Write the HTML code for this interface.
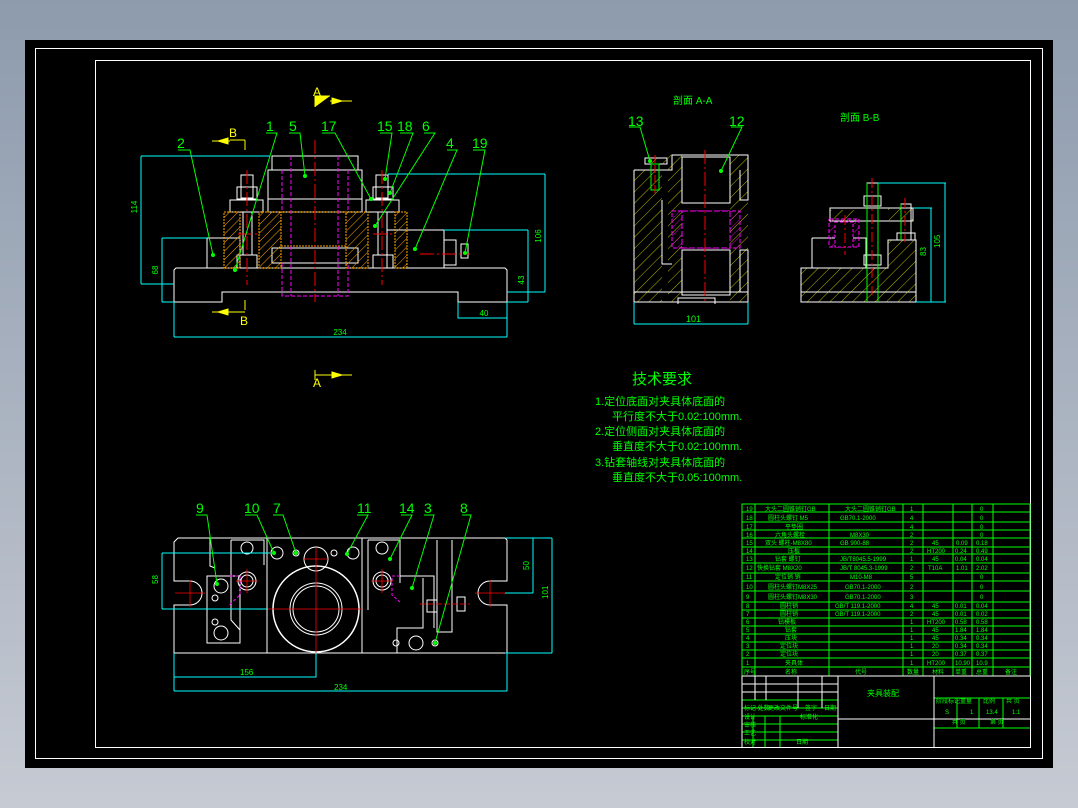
<!DOCTYPE html>
<html><head><meta charset="utf-8"><style>
html,body{margin:0;padding:0;width:1078px;height:808px;overflow:hidden;background:linear-gradient(#8d9bad,#c6cad3);}
svg{position:absolute;left:0;top:0}
text{font-family:"Liberation Sans","Noto Sans CJK SC",sans-serif;}
</style></head><body>
<svg width="1078" height="808" viewBox="0 0 1078 808" xmlns="http://www.w3.org/2000/svg">
<defs>
<pattern id="ho" width="6" height="6" patternUnits="userSpaceOnUse" patternTransform="rotate(45)"><line x1="0" y1="0" x2="0" y2="6" stroke="#ffa500" stroke-width="1"/></pattern>
<pattern id="hy" width="8" height="8" patternUnits="userSpaceOnUse" patternTransform="rotate(45)"><line x1="0" y1="0" x2="0" y2="8" stroke="#e6e600" stroke-width="0.8"/></pattern>
<pattern id="hm" width="6" height="6" patternUnits="userSpaceOnUse" patternTransform="rotate(45)"><line x1="0" y1="0" x2="0" y2="6" stroke="#ff00ff" stroke-width="0.8"/></pattern>
</defs>
<rect x="25" y="40" width="1028" height="728" fill="#000"/>
<rect x="35.5" y="48.5" width="1007" height="710" fill="none" stroke="#fff"/>
<rect x="95.5" y="60.5" width="935" height="687" fill="none" stroke="#fff"/>

<!-- FRONT VIEW -->
<g fill="none" stroke="#fff" stroke-width="1">
<path d="M176 268 H505 L507 270 V302 H458 V292 H222 V302 H174 V270 Z"/>
<rect x="272" y="156" width="86" height="14"/>
<rect x="268" y="170" width="94" height="42"/>
<line x1="268" y1="199" x2="362" y2="199"/>
<rect x="272" y="248" width="86" height="15"/>
<rect x="207" y="238" width="33" height="30"/>
<rect x="387" y="230" width="57" height="38"/>
<rect x="444" y="240" width="12" height="25"/>
<rect x="461" y="244" width="7" height="14"/>
<rect x="241" y="175" width="12" height="23"/><rect x="237" y="187" width="20" height="12"/><rect x="230" y="200" width="33" height="12"/>
<rect x="376" y="175" width="12" height="23"/><rect x="373" y="187" width="20" height="12"/><rect x="366" y="200" width="33" height="12"/>
<rect x="237" y="255" width="20" height="13"/><rect x="373" y="255" width="20" height="13"/>
<line x1="243" y1="212" x2="243" y2="255"/><line x1="252" y1="212" x2="252" y2="255"/>
<line x1="378" y1="212" x2="378" y2="255"/><line x1="387" y1="212" x2="387" y2="255"/>
</g>
<rect x="224" y="212" width="16" height="56" fill="url(#ho)" stroke="#ffa500" stroke-dasharray="2 1"/>
<rect x="259" y="212" width="22" height="56" fill="url(#ho)" stroke="#ffa500" stroke-dasharray="2 1"/>
<rect x="346" y="212" width="22" height="56" fill="url(#ho)" stroke="#ffa500" stroke-dasharray="2 1"/>
<rect x="395" y="212" width="12" height="56" fill="url(#ho)" stroke="#ffa500" stroke-dasharray="2 1"/>
<path d="M281 212 H346 M281 246 H346" stroke="#ffa500" stroke-dasharray="2 1"/>
<g stroke="#ff00ff" stroke-dasharray="4 2"><line x1="291" y1="156" x2="291" y2="296"/><line x1="338" y1="156" x2="338" y2="296"/><line x1="282" y1="170" x2="282" y2="212"/><line x1="348" y1="170" x2="348" y2="212"/><path d="M282 263 V296 H348 V263" fill="none"/></g>
<g stroke="#f00" stroke-dasharray="14 3 2 3"><line x1="315" y1="140" x2="315" y2="302"/><line x1="247" y1="170" x2="247" y2="285"/><line x1="382" y1="170" x2="382" y2="285"/><line x1="420" y1="254" x2="470" y2="254"/><line x1="238" y1="234" x2="258" y2="234"/><line x1="373" y1="234" x2="393" y2="234"/></g>
<g stroke="#0ff" fill="none"><path d="M141 156 H270 M141 284 H174 M141 156 V284"/><path d="M162 238 H207 M162 302 H174 M162 238 V302"/><path d="M545 174 H388 M545 292 H507 M545 174 V292"/><path d="M528 230 H444 M528 302 H507 M528 230 V302"/><path d="M174 302 V337 M507 302 V337 M174 337 H507"/><path d="M458 302 V318 H507"/></g>
<g fill="#0f0" font-size="8" text-anchor="middle"><text x="137" y="207" transform="rotate(-90 137 207)">114</text><text x="158" y="270" transform="rotate(-90 158 270)">68</text><text x="541" y="236" transform="rotate(-90 541 236)">106</text><text x="524" y="280" transform="rotate(-90 524 280)">43</text><text x="340" y="335">234</text><text x="484" y="316">40</text></g>
<g stroke="#ff0" stroke-width="1" fill="#ff0"><path d="M315 107 V96 H330"/><path d="M330 101 H352 M332 98 L342 101 L332 104Z"/><path d="M245 140 V150 M245 140 H230 M212 141 H230 M228 138 L218 141 L228 144Z"/><path d="M245 300 V310 M245 312 H230 M212 312 H230 M228 309 L218 312 L228 315Z"/><path d="M315 380 V370 M315 375 H330 M330 375 H352 M332 372 L342 375 L332 378Z"/></g>
<g fill="#ff0" font-size="12"><text x="313" y="96">A</text><text x="229" y="137">B</text><text x="240" y="325">B</text><text x="313" y="387">A</text></g>
<g stroke="#0f0" fill="none"><path d="M178 150 H190 L213 255"/><path d="M266 133 H277 L235 270"/><path d="M289 133 H300 L305 176"/><path d="M322 133 H335 L371 199"/><path d="M380 133 H392 L385 179"/><path d="M400 133 H413 L390 193"/><path d="M424 133 H435 L375 226"/><path d="M447 150 H457 L415 249"/><path d="M473 150 H485 L465 253"/></g>
<g fill="#0f0"><circle cx="213" cy="255" r="2"/><circle cx="235" cy="270" r="2"/><circle cx="305" cy="176" r="2"/><circle cx="371" cy="199" r="2"/><circle cx="385" cy="179" r="2"/><circle cx="390" cy="193" r="2"/><circle cx="375" cy="226" r="2"/><circle cx="415" cy="249" r="2"/><circle cx="465" cy="253" r="2"/></g>
<g fill="#0f0" font-size="14"><text x="177" y="148">2</text><text x="266" y="131">1</text><text x="289" y="131">5</text><text x="321" y="131">17</text><text x="377" y="131">15</text><text x="397" y="131">18</text><text x="422" y="131">6</text><text x="446" y="148">4</text><text x="472" y="148">19</text></g>

<!-- SECTION A-A -->
<g fill="#0f0" font-size="10"><text x="673" y="104">剖面 A-A</text><text x="840" y="121">剖面 B-B</text></g>
<rect x="634" y="170" width="28" height="132" fill="url(#hy)"/>
<rect x="668" y="155" width="14" height="147" fill="url(#hy)"/>
<rect x="730" y="155" width="18" height="147" fill="url(#hy)"/>
<g fill="none" stroke="#fff"><path d="M634 170 H672 V155 H748 V200 H740 V170 M634 170 V302 H748 V250 H740 V292"/><rect x="682" y="157" width="48" height="46" fill="#000"/><rect x="682" y="250" width="48" height="45" fill="#000"/><path d="M634 292 H748 M662 200 V264 H672 M678 304 V298 H715 V304"/></g>
<rect x="672" y="211" width="68" height="37" fill="url(#hm)" stroke="#ff00ff" stroke-dasharray="4 2"/>
<rect x="682" y="211" width="48" height="37" fill="#000" stroke="#ff00ff" stroke-dasharray="6 2"/>
<rect x="645" y="158" width="22" height="6" fill="url(#hy)" stroke="#fff"/>
<rect x="651" y="164" width="8" height="26" fill="none" stroke="#0f0"/>
<line x1="705" y1="150" x2="705" y2="302" stroke="#f00" stroke-dasharray="14 3 2 3"/>
<line x1="655" y1="155" x2="655" y2="195" stroke="#f00" stroke-dasharray="8 2"/>
<g stroke="#0ff" fill="none"><path d="M634 302 V324 M748 302 V324 M634 324 H748"/></g>
<text x="686" y="322" fill="#0f0" font-size="9">101</text>
<g stroke="#0f0" fill="none"><path d="M629 127 H640 L650 161"/><path d="M731 127 H742 L721 171"/></g>
<circle cx="650" cy="161" r="2" fill="#0f0"/><circle cx="721" cy="171" r="2" fill="#0f0"/>
<g fill="#0f0" font-size="14"><text x="628" y="126">13</text><text x="729" y="126">12</text></g>

<!-- SECTION B-B -->
<rect x="801" y="268" width="115" height="34" fill="url(#hy)"/>
<rect x="888" y="240" width="28" height="28" fill="url(#hy)"/>
<rect x="830" y="210" width="26" height="12" fill="url(#hy)"/>
<rect x="888" y="208" width="25" height="12" fill="url(#hy)"/>
<g fill="none" stroke="#fff"><path d="M801 268 V302 H916 V240 H888 V268 Z"/><path d="M801 292 H916 M812 238 H866 V268 M812 238 V268"/><rect x="867" y="183" width="11" height="119" fill="none"/><rect x="864" y="196" width="17" height="10"/><rect x="864" y="255" width="17" height="10"/><rect x="901" y="204" width="10" height="36"/><rect x="897" y="233" width="18" height="7"/><rect x="830" y="208" width="83" height="13"/></g>
<rect x="829" y="219" width="30" height="28" fill="url(#hm)" stroke="#ff00ff" stroke-dasharray="4 2"/>
<rect x="835" y="222" width="18" height="25" fill="#000" stroke="#ff00ff" stroke-dasharray="3 2"/>
<g stroke="#0f0" fill="none"><line x1="867" y1="183" x2="867" y2="302"/><line x1="878" y1="183" x2="878" y2="302"/><line x1="901" y1="204" x2="901" y2="240"/></g>
<g stroke="#f00" stroke-dasharray="10 3 2 3"><line x1="872" y1="178" x2="872" y2="295"/><line x1="905" y1="198" x2="905" y2="242"/><line x1="845" y1="215" x2="845" y2="255"/></g>
<g stroke="#0ff" fill="none"><path d="M878 183 H946 M916 302 H946 M945 183 V302"/><path d="M913 208 H932 M931 208 V302"/></g>
<g fill="#0f0" font-size="8"><text x="940" y="248" transform="rotate(-90 940 248)">105</text><text x="926" y="256" transform="rotate(-90 926 256)">83</text></g>

<!-- TECH TEXT -->
<g fill="#0f0" font-family="'Liberation Sans','Noto Sans CJK SC',sans-serif">
<text x="632" y="384" font-size="15">技术要求</text>
<g font-size="11"><text x="595" y="405">1.定位底面对夹具体底面的</text><text x="612" y="420">平行度不大于0.02:100mm.</text><text x="595" y="435">2.定位侧面对夹具体底面的</text><text x="612" y="450">垂直度不大于0.02:100mm.</text><text x="595" y="466">3.钻套轴线对夹具体底面的</text><text x="612" y="481">垂直度不大于0.05:100mm.</text></g>
</g>

<!-- TOP VIEW -->
<g fill="none" stroke="#fff">
<path d="M178 538 H505 L507 540 V581 H490 A12 12 0 0 0 490 605 H507 V653 H174 V605 H190 A12 12 0 0 0 190 581 H174 V542 Z"/>
<path d="M210 538 V566 L215 568 M207 576 H240 V643 H207 Z"/><path d="M231 540 H264 V565 M231 540 V620 L240 630"/>
<path d="M267 538 V653 M362 538 V653 M368 540 H400 V583 M368 540 V610"/><path d="M400 576 H434 V628 M423 578 V628 H397 V653 M437 540 V632 H452 V540"/>
<circle cx="316" cy="609" r="43" stroke-width="1.5"/><circle cx="316" cy="609" r="26"/><circle cx="316" cy="609" r="23"/><circle cx="316" cy="559" r="12"/>
<circle cx="247" cy="581" r="9"/><circle cx="247" cy="581" r="6"/><circle cx="382" cy="581" r="9"/><circle cx="382" cy="581" r="6"/>
<circle cx="221" cy="586" r="7"/><circle cx="221" cy="633" r="7"/><circle cx="277" cy="553" r="6"/><circle cx="353" cy="553" r="6"/><circle cx="247" cy="548" r="6"/><circle cx="382" cy="548" r="6"/><circle cx="416" cy="643" r="7"/>
<circle cx="296" cy="553" r="3"/><circle cx="334" cy="553" r="3"/><circle cx="215" cy="598" r="3"/><circle cx="215" cy="622" r="3"/><circle cx="396" cy="643" r="3"/><circle cx="435" cy="643" r="3"/>
<rect x="427" y="600" width="10" height="12"/><rect x="457" y="597" width="8" height="14"/>
</g>
<g stroke="#f00" stroke-width="0.8"><line x1="316" y1="548" x2="316" y2="655"/><line x1="268" y1="609" x2="362" y2="609"/><line x1="304" y1="559" x2="328" y2="559"/><line x1="175" y1="593" x2="205" y2="593"/><line x1="190" y1="580" x2="190" y2="607"/><line x1="475" y1="593" x2="505" y2="593"/><line x1="490" y1="580" x2="490" y2="607"/><line x1="236" y1="581" x2="258" y2="581"/><line x1="247" y1="569" x2="247" y2="593"/><line x1="371" y1="581" x2="393" y2="581"/><line x1="382" y1="569" x2="382" y2="593"/><line x1="420" y1="604" x2="470" y2="604" stroke-dasharray="6 2"/></g>
<g stroke="#ff00ff" stroke-dasharray="3 2" fill="none"><path d="M230 576 H240 V595 L228 606"/><path d="M400 576 H392 V595 L400 602"/></g>
<g stroke="#0ff" fill="none"><path d="M162 553 H270 M162 609 H268 M162 553 V609"/><path d="M505 538 H552 M505 653 H552 M552 538 V653"/><path d="M505 593 H533 M533 538 V593"/><path d="M174 653 V691 M507 653 V691 M174 691 H507 M174 677 H316 V653"/></g>
<g fill="#0f0" font-size="8"><text x="158" y="584" transform="rotate(-90 158 584)">58</text><text x="548" y="599" transform="rotate(-90 548 599)">101</text><text x="529" y="570" transform="rotate(-90 529 570)">50</text><text x="240" y="675">156</text><text x="334" y="690">234</text></g>
<g stroke="#0f0" fill="none"><path d="M196 515 H207 L217 584"/><path d="M245 515 H257 L274 553"/><path d="M273 515 H283 L296 553"/><path d="M357 515 H368 L347 554"/><path d="M401 515 H412 L390 559"/><path d="M424 515 H434 L412 588"/><path d="M462 515 H471 L435 643"/></g>
<g fill="#0f0"><circle cx="217" cy="584" r="2"/><circle cx="274" cy="553" r="2"/><circle cx="296" cy="553" r="2"/><circle cx="347" cy="554" r="2"/><circle cx="390" cy="559" r="2"/><circle cx="412" cy="588" r="2"/><circle cx="435" cy="643" r="2"/></g>
<g fill="#0f0" font-size="14"><text x="196" y="513">9</text><text x="244" y="513">10</text><text x="273" y="513">7</text><text x="357" y="513">11</text><text x="399" y="513">14</text><text x="424" y="513">3</text><text x="460" y="513">8</text></g>

<!-- TITLE BLOCK / PARTS LIST -->
<g stroke="#0f0" fill="none" stroke-width="1">
<rect x="742" y="504" width="288" height="172"/>
<path d="M742 512 H1030 M742 522 H1030 M742 530 H1030 M742 538 H1030 M742 547 H1030 M742 554 H1030 M742 563 H1030 M742 573 H1030 M742 581 H1030 M742 591 H1030 M742 602 H1030 M742 610 H1030 M742 618 H1030 M742 626 H1030 M742 634 H1030 M742 642 H1030 M742 650 H1030 M742 658 H1030 M742 667 H1030"/>
<path d="M755 504 V676 M829 504 V676 M903 504 V676 M923 504 V676 M953 504 V676 M972 504 V676 M993 504 V676"/>
<path d="M742 700 H838 M742 708 H838 M742 716 H838 M742 724 H838 M742 732 H838 M742 740 H838 M934 698 H1030 M934 728 H1030 M957 698 V728 M979 698 V728 M1003 698 V728 M753 716 V747 M765 716 V747 M780 716 V747"/>
</g>
<g stroke="#fff" fill="none"><path d="M742 676 V747 M742 676 H1030 M838 676 V747 M934 676 V747 M838 719 H1030 M742 684 H838 M742 692 H838 M755 676 V700 M766 676 V700 M798 676 V708 M822 676 V708 M838 676 V747"/></g>
<g fill="#0f0" font-size="6" font-family="'Liberation Sans','Noto Sans CJK SC',sans-serif">
<text x="746" y="511">19</text><text x="765" y="511">大头二圆锥销钉GB</text><text x="845" y="511">大头二圆锥销钉GB</text><text x="910" y="511">1</text><text x="980" y="511">0</text>
<text x="746" y="520">18</text><text x="768" y="520">圆柱头螺钉 M5</text><text x="840" y="520">GB70.1-2000</text><text x="910" y="520">4</text><text x="980" y="520">0</text>
<text x="746" y="529">17</text><text x="785" y="529">平垫圈</text><text x="910" y="529">4</text><text x="980" y="529">0</text>
<text x="746" y="537">16</text><text x="775" y="537">六角头螺栓</text><text x="850" y="537">M8X30</text><text x="910" y="537">2</text><text x="980" y="537">0</text>
<text x="746" y="545">15</text><text x="765" y="545">双头 螺柱-M8X80</text><text x="840" y="545">GB 900-88</text><text x="910" y="545">2</text><text x="932" y="545">45</text><text x="956" y="545">0.09</text><text x="976" y="545">0.18</text>
<text x="746" y="553">14</text><text x="788" y="553">压板</text><text x="910" y="553">2</text><text x="927" y="553">HT200</text><text x="955" y="553">0.24</text><text x="976" y="553">0.49</text>
<text x="746" y="561">13</text><text x="775" y="561">钻套 螺钉</text><text x="840" y="561">JB/T8045.5-1999</text><text x="910" y="561">1</text><text x="932" y="561">45</text><text x="955" y="561">0.04</text><text x="976" y="561">0.04</text>
<text x="746" y="570">12</text><text x="757" y="570">快换钻套 M8X20</text><text x="840" y="570">JB/T 8045.3-1999</text><text x="910" y="570">2</text><text x="928" y="570">T10A</text><text x="956" y="570">1.01</text><text x="976" y="570">2.02</text>
<text x="746" y="579">11</text><text x="775" y="579">定位销 销</text><text x="850" y="579">M10-M8</text><text x="910" y="579">5</text><text x="980" y="579">0</text>
<text x="746" y="589">10</text><text x="768" y="589">圆柱头螺钉M8X25</text><text x="845" y="589">GB70.1-2000</text><text x="910" y="589">2</text><text x="980" y="589">0</text>
<text x="746" y="599">9</text><text x="768" y="599">圆柱头螺钉M8X30</text><text x="845" y="599">GB70.1-2000</text><text x="910" y="599">3</text><text x="980" y="599">0</text>
<text x="746" y="608">8</text><text x="780" y="608">圆柱销</text><text x="835" y="608">GB/T 119.1-2000</text><text x="910" y="608">4</text><text x="932" y="608">45</text><text x="955" y="608">0.01</text><text x="976" y="608">0.04</text>
<text x="746" y="616">7</text><text x="780" y="616">圆柱销</text><text x="835" y="616">GB/T 119.1-2000</text><text x="910" y="616">2</text><text x="932" y="616">45</text><text x="955" y="616">0.01</text><text x="976" y="616">0.02</text>
<text x="746" y="624">6</text><text x="778" y="624">钻模板</text><text x="910" y="624">1</text><text x="927" y="624">HT200</text><text x="955" y="624">0.58</text><text x="976" y="624">0.58</text>
<text x="746" y="632">5</text><text x="785" y="632">钻套</text><text x="910" y="632">1</text><text x="932" y="632">45</text><text x="955" y="632">1.84</text><text x="976" y="632">1.84</text>
<text x="746" y="640">4</text><text x="785" y="640">压块</text><text x="910" y="640">1</text><text x="932" y="640">45</text><text x="955" y="640">0.34</text><text x="976" y="640">0.34</text>
<text x="746" y="648">3</text><text x="780" y="648">定位块</text><text x="910" y="648">1</text><text x="932" y="648">20</text><text x="955" y="648">0.34</text><text x="976" y="648">0.34</text>
<text x="746" y="656">2</text><text x="780" y="656">定位块</text><text x="910" y="656">1</text><text x="932" y="656">20</text><text x="955" y="656">0.37</text><text x="976" y="656">0.37</text>
<text x="746" y="665">1</text><text x="785" y="665">夹具体</text><text x="910" y="665">1</text><text x="927" y="665">HT200</text><text x="955" y="665">10.90</text><text x="976" y="665">10.9</text>
<text x="744" y="674">序号</text><text x="785" y="674">名称</text><text x="855" y="674">代号</text><text x="907" y="674">数量</text><text x="932" y="674">材料</text><text x="955" y="674">单重</text><text x="976" y="674">总重</text><text x="1005" y="674">备注</text>
<text x="867" y="696" font-size="8">夹具装配</text>
<text x="936" y="703">阶段标记</text><text x="960" y="703">重量</text><text x="983" y="703">比例</text><text x="1006" y="703">共 页</text>
<text x="945" y="714">S</text><text x="970" y="714">1</text><text x="986" y="714">13.4</text><text x="1012" y="714">1:1</text>
<text x="952" y="724">共 页</text><text x="990" y="724">第 页</text>
<text x="744" y="710">标记 处数</text><text x="768" y="710">更改文件号</text><text x="805" y="710">签字</text><text x="824" y="710">日期</text>
<text x="744" y="719">设计</text><text x="800" y="719">标准化</text><text x="744" y="727">审核</text><text x="744" y="735">工艺</text><text x="744" y="744">校对</text><text x="796" y="744">日期</text>
</g>
</svg>
</body></html>
